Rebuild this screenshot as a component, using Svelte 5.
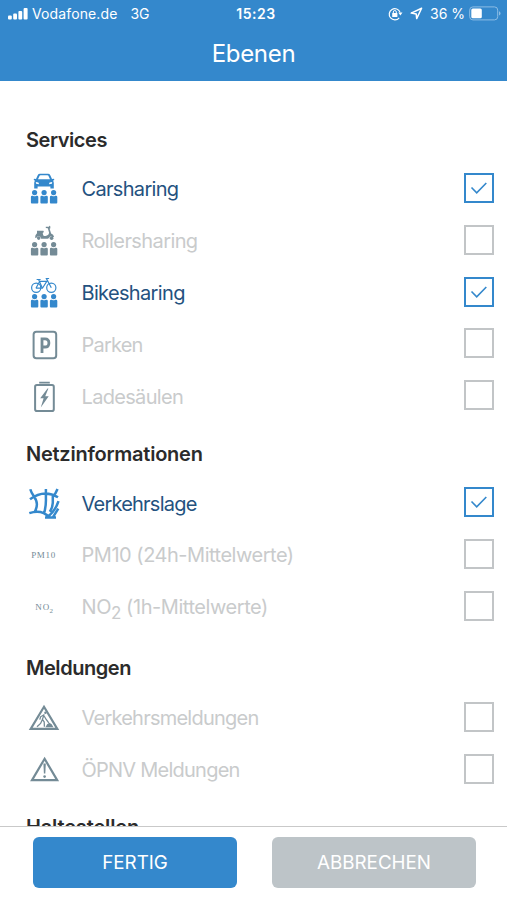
<script>
  // ls: letter-spacing in px for each caption
  const sections = [
    { title: 'Services', ls: -0.45, items: [
      { icon: 'car', label: 'Carsharing', ls: -0.68, on: true },
      { icon: 'scooter', label: 'Rollersharing', ls: -0.6 },
      { icon: 'bike', label: 'Bikesharing', ls: -0.66, on: true },
      { icon: 'parking', label: 'Parken', ls: -0.8 },
      { icon: 'charge', label: 'Ladesäulen', ls: -0.68 }
    ] },
    { title: 'Netzinformationen', ls: -0.24, items: [
      { icon: 'traffic', label: 'Verkehrslage', ls: -0.78, on: true },
      { icon: 'pm10', label: 'PM10 (24h-Mittelwerte)', ls: -0.48 },
      { icon: 'no2', label: 'NO', sub: '2', rest: ' (1h-Mittelwerte)', ls: -0.44 }
    ] },
    { title: 'Meldungen', ls: -0.45, items: [
      { icon: 'works', label: 'Verkehrsmeldungen', ls: -0.77 },
      { icon: 'warning', label: 'ÖPNV Meldungen', ls: -0.76 }
    ] },
    { title: 'Haltestellen', ls: -0.15, items: [] }
  ];
</script>

{#snippet people()}
  {#each [10.6, 20.1, 29.6] as x}
    <circle cx={x} cy="23.6" r="2.6" />
    <path d="M{x - 3.7} 28q0-1.3 1.3-1.3h.8q1.6 1 3.2 0h.8q1.3 0 1.3 1.3v5.5q0 .9-.9.9h-5.6q-.9 0-.9-.9z" />
  {/each}
{/snippet}

<div class="app">
  <header>
    <div class="status">
      <svg class="signal" width="20" height="12" viewBox="0 0 20 12" fill="#fff">
        <rect x="0" y="7.5" width="3.8" height="4" rx="1" /><rect x="5.2" y="5.5" width="3.8" height="6" rx="1" />
        <rect x="10.4" y="3" width="3.8" height="8.5" rx="1" /><rect x="15.6" y="0" width="4" height="11.5" rx="1" />
      </svg>
      <span class="carrier">Vodafone.de</span>
      <span class="net">3G</span>
      <span class="time">15:23</span>
      <span class="right">
        <svg width="15" height="14" viewBox="0 0 15 14" fill="none" stroke="#fff">
          <path d="M11.2 10.8A5.6 5.6 0 1 1 12.1 5.4" stroke-width="1.2" />
          <path d="M10.3 5.6h4.2l-2.1 3z" fill="#fff" stroke="none" />
          <rect x="4.2" y="6.1" width="5.2" height="4" rx=".5" fill="#fff" stroke="none" />
          <path d="M5.3 6.3V5a1.5 1.5 0 0 1 3 0v1.3" />
        </svg>
        <svg class="nav" width="13" height="13" viewBox="0 0 13 13" fill="none" stroke="#fff" stroke-width="1.5" stroke-linejoin="round">
          <path d="M11.6 1.2 1.2 6.1l5 .8.5 4.7z" />
        </svg>
        <span class="pct">36 %</span>
        <svg width="32" height="15" viewBox="0 0 32 15" fill="none">
          <rect x=".7" y=".9" width="28" height="13" rx="3.2" stroke="#8dbde5" />
          <rect x="2.3" y="2.6" width="10.5" height="9.6" rx="1.5" fill="#fff" />
          <path d="M30 5.3q1.5.6 1.5 2.1T30 9.5z" fill="#8dbde5" />
        </svg>
      </span>
    </div>
    <h1>Ebenen</h1>
  </header>

  <main>
    {#each sections as s}
      <section>
        <h2 style:letter-spacing="{s.ls}px">{s.title}</h2>
        {#each s.items as item}
          <div class="row" class:on={item.on} class:tall={item.sub}>
            <svg class="icon" width="40" height="40" viewBox="0 0 40 40" fill="currentColor">
              {#if item.icon === 'car'}
                <path fill-rule="evenodd" d="M12 10 13.7 6.2Q14.4 4.8 16 4.8h8q1.6 0 2.3 1.4L28 10l2-.2.3 1.3-1.3.6q.8 1 .8 2.3v5.5h-3.4v-2H13.6v2h-3.4V14q0-1.3.8-2.3l-1.3-.6.3-1.3zM14 10.2h12l-1.6-3.4q-.2-.5-.9-.5h-7q-.7 0-.9.5zM11.8 13l.3 1.8 3 .4-.7-1.8zM28.2 13l-2.6.4-.7 1.8 3-.4z" />
                {@render people()}
              {:else if item.icon === 'scooter'}
                <path d="M13 9.8h6.4l.5 1.3-1.2.8.6 2.5q2.8 1.4 5.2-.8l.6-1.9-1.3-4.4-2-.2V5.8l3.1-.1.5-.9.8.3.2 2.2-.8.5 1.5 4.6q2.5.8 3 3.6l-1.5.2q-2.3-1.7-3.5.8l-1.5.7h-6.4q-.5-2.4-2.6-2.4T12.3 17l-1.2-.3q-.2-2.8 1.9-4.4z" />
                <circle cx="14.7" cy="17.1" r="1.8" /><circle cx="27.6" cy="17.2" r="1.8" />
                {@render people()}
              {:else if item.icon === 'bike'}
                <g fill="none" stroke="currentColor" stroke-width="1.2">
                  <circle cx="12.2" cy="14.7" r="4.6" /><circle cx="27.3" cy="14.7" r="4.6" />
                  <path d="M12.2 14.7 15.7 8.3h7.1l-4.4 6.9h-6zM18.4 15.2 14.6 6.5h-2M14.6 6.5h2M27.3 14.7 22.4 5.5h2.7" />
                </g>
                {@render people()}
              {:else if item.icon === 'parking'}
                <rect x="9.6" y="6.7" width="22.6" height="26.6" rx="2.8" fill="none" stroke="currentColor" stroke-width="2" />
                <path d="M18 28V13.8h3q3.9 0 3.9 4.1T21 22h-3" fill="none" stroke="currentColor" stroke-width="2.8" />
              {:else if item.icon === 'charge'}
                <rect x="11.1" y="8" width="18.7" height="26" rx="1.8" fill="none" stroke="currentColor" stroke-width="2" />
                <path d="M15.2 4.8h10.6v1.8H15.2zM23.5 11.5 16.2 21.3h3.4l-2.8 9.2 7.9-11.3h-3.5l3.2-7.7z" />
              {:else if item.icon === 'traffic'}
                <g fill="none" stroke="currentColor" stroke-width="2.5">
                  <path d="M6.3 5.2C8 11.7 12.9 13.7 12.9 20.2q0 4-2.4 8M6 15.2Q20 4.7 34 13.2M21.9 5v9q.3 8-1.8 15.2M33.5 5Q31.5 10.2 28.8 12.7v6q-.3 5-3 9M5.3 29.2q12-4.5 20 4M34.5 17.2Q31.5 26.7 23.5 33.2M34.3 24.7 29 33.2M21 33.4h11" />
                </g>
              {:else if item.icon === 'pm10'}
                <text x="7.2" y="23" class="mini" textLength="24">PM10</text>
              {:else if item.icon === 'no2'}
                <text x="11.3" y="22.8" class="mini" textLength="14">NO</text>
                <text x="25.4" y="25.8" class="mini tiny">2</text>
              {:else if item.icon === 'works'}
                <path d="M20 8.8 33.3 30.9H6.7z" fill="none" stroke="currentColor" stroke-width="2.2" />
                <circle cx="21.4" cy="14.8" r="1.2" />
                <path d="M20.4 16.5 16.6 18.8l-.8 2.8M20 17l-1.6 4.4 1.8 2.6.2 4.8M18.4 21.4l-1.8 4-3.6 3.4M20.3 18.2l1.7 3 2.8 3.6" fill="none" stroke="currentColor" stroke-width="1.3" />
                <path d="M21.4 29.2q1.4-3.4 4-4.4 2.6 1 4 4.4z" />
              {:else}
                <path d="M20.6 8.8 33.2 30.2H8z" fill="none" stroke="currentColor" stroke-width="2.2" />
                <path d="M19.4 13.6h2.4l-.5 10h-1.4z" /><circle cx="20.6" cy="26.6" r="1.3" />
              {/if}
            </svg>
            <span class="label" style:letter-spacing="{item.ls}px">{item.label}{#if item.sub}<sub>{item.sub}</sub>{item.rest}{/if}</span>
            <span class="box">
              {#if item.on}
                <svg width="18" height="14" viewBox="0 0 18 14" fill="none" stroke="currentColor" stroke-width="1.6"><path d="M1.5 6.5 6.7 11.8 16.3 2" /></svg>
              {/if}
            </span>
          </div>
        {/each}
      </section>
    {/each}
  </main>

  <footer>
    <button class="done">FERTIG</button>
    <button class="cancel">ABBRECHEN</button>
  </footer>
</div>

<style>
  .app { width: 507px; height: 900px; display: flex; flex-direction: column; overflow: hidden; background: #fff; font-family: Inter, Roboto, sans-serif; }
  header { height: 81px; background: #3488cc; color: #fff; flex: none; }
  .status { display: flex; align-items: center; height: 27px; padding: 0 6px 0 8px; position: relative; font-size: 14px; }
  .signal { margin-top: 0; }
  .carrier { margin-left: 4px; letter-spacing: 0.12px; }
  .net { margin-left: 13px; }
  .time { position: absolute; left: 0; right: 0; text-align: center; font-weight: 600; padding-left: 5px; letter-spacing: 0.5px; }
  .right { margin-left: auto; display: flex; align-items: center; }
  .nav { margin: 0 7px; }
  .pct { margin-right: 4px; }
  h1 { margin: 0; height: 54px; line-height: 54px; text-align: center; font-size: 24px; font-weight: 400; letter-spacing: -0.3px; }
  main { flex: 1; min-height: 0; overflow: hidden; padding: 34.6px 13px 0 24px; }
  section { margin-bottom: 7.2px; }
  h2 { margin: 0 0 0 2px; height: 48px; line-height: 48px; font-size: 20px; font-weight: 600; color: #2b2b2b; }
  .row { height: 51.8px; display: flex; align-items: center; color: #748b96; }
  .row.on { color: #3488cc; }
  .row.tall { padding-bottom: 4px; }
  .icon { flex: none; }
  .label { margin-left: 17.5px; flex: 1; font-size: 20px; line-height: 26px; color: #c9cbcc; white-space: nowrap; }
  .on .label { color: #24527f; }
  sub { font-size: 17px; line-height: 0; }
  .box { box-sizing: border-box; width: 30px; height: 30px; border: 2.5px solid #c2c5c7; margin-top: -3px; display: flex; align-items: center; justify-content: center; }
  .on .box { border-color: #3488cc; }
  .mini { font: 9px "Liberation Serif", serif; }
  .tiny { font-size: 7px; }
  footer { height: 74px; flex: none; box-sizing: border-box; border-top: 1px solid #c9c9c9; display: flex; gap: 35px; padding: 10px 31px 0 33px; }
  button { width: 204px; height: 51px; border: 0; border-radius: 6px; padding: 0; color: #fff; font: 18.8px Inter, sans-serif; }
  .done { background: #3488cc; }
  .cancel { background: #bdc4c8; }
</style>
